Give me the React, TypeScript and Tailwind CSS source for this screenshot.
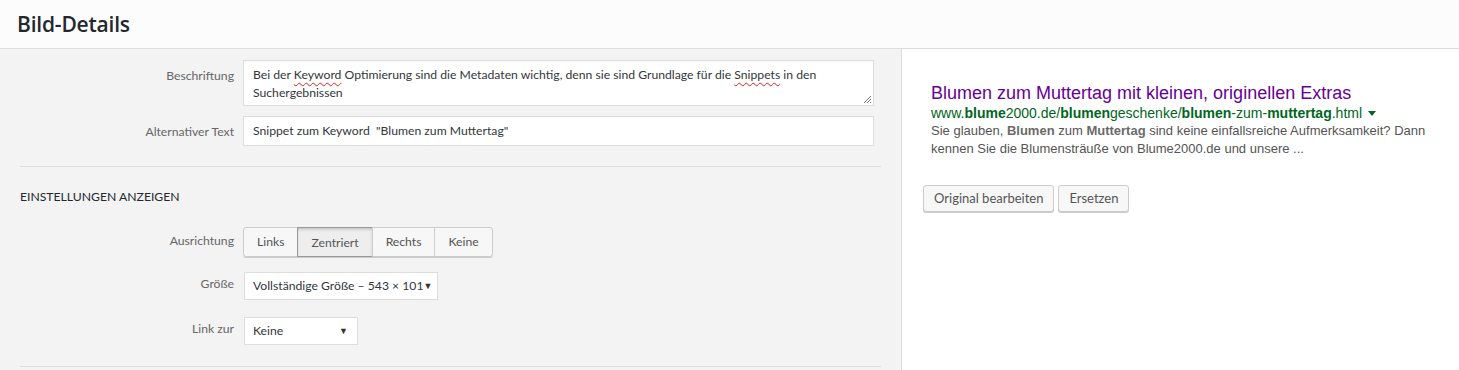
const ui = "font-['Lato','Open_Sans',sans-serif]";
const head = "font-['Open_Sans','Noto_Sans',sans-serif]";
const arial = "font-['Liberation_Sans',Arial,sans-serif]";

const align = [
  { label: "Links", active: false },
  { label: "Zentriert", active: true },
  { label: "Rechts", active: false },
  { label: "Keine", active: false },
];

const Spell = ({ children }: { children: string }) => (
  <span className="underline decoration-wavy decoration-[#e02020] decoration-1 underline-offset-[3px]">{children}</span>
);

const Row = ({ label, top = "pt-[7px]", children }: { label: string; top?: string; children: React.ReactNode }) => (
  <div className="flex">
    <div className={`w-[234px] shrink-0 text-right text-[#666] ${top}`}>{label}</div>
    <div className="ml-[9px]">{children}</div>
  </div>
);

const Select = ({ value, width }: { value: string; width: string }) => (
  <div className={`flex h-[28px] items-center justify-between whitespace-nowrap border border-[#ddd] bg-white pl-[8px] pr-[9px] text-[#32373c] ${width}`}>
    <span>{value}</span>
    <span className="text-[9px] text-[#333]">▼</span>
  </div>
);

export default function App() {
  return (
    <div className={`flex h-[370px] w-[1459px] flex-col overflow-hidden bg-white text-[12.2px] text-[#32373c] ${ui}`}>
      <header className={`flex h-[49px] shrink-0 items-center border-b border-[#dddddd] bg-[#fcfcfc] pl-[17px] shadow-[0_1px_2px_rgba(0,0,0,0.04)] ${head}`}>
        <h1 className="text-[21px] font-semibold leading-none tracking-[-0.2px] text-[#23282d]">Bild-Details</h1>
      </header>
      <div className="flex flex-1">
        <div className="w-[901px] shrink-0 bg-[#f3f3f3] pt-[11px]">
          <Row label="Beschriftung">
            <div className="relative h-[46px] w-[631px] border border-[#ddd] bg-white px-[9px] pt-[5px] leading-[18px] text-[#32373c] shadow-[inset_0_1px_2px_rgba(0,0,0,0.04)]">
              <div>
                Bei der <Spell>Keyword</Spell> Optimierung sind die Metadaten wichtig, denn sie sind Grundlage für die <Spell>Snippets</Spell> in den
              </div>
              <div>Suchergebnissen</div>
              <svg className="absolute bottom-[1px] right-[1px]" width="9" height="9" viewBox="0 0 9 9">
                <path d="M8 1 L1 8 M8 4 L4 8 M8 7 L7 8" stroke="#777" strokeWidth="1" />
              </svg>
            </div>
          </Row>
          <div className="mt-[10px]">
            <Row label="Alternativer Text">
              <div className="flex h-[30px] w-[631px] items-center border border-[#ddd] bg-white px-[9px] text-[#32373c]">
                Snippet zum Keyword&nbsp; "Blumen zum Muttertag"
              </div>
            </Row>
          </div>
          <div className="mx-[20px] mt-[20px] h-px bg-[#dddddd]" />
          <h2 className="mt-[21px] ml-[20px] font-normal uppercase leading-[18px] text-[#23282d]">Einstellungen anzeigen</h2>
          <div className="mt-[21px]">
            <Row label="Ausrichtung" top="pt-[5px]">
              <div className="flex h-[30px] rounded-[3px] shadow-[0_1px_0_#cccccc]">
                {align.map((a, i) => (
                  <div
                    key={a.label}
                    className={`flex items-center border px-[13px] text-[#555] ${
                      a.active
                        ? "border-[#999] bg-[#eeeeee] pt-[3px] shadow-[inset_0_2px_5px_-3px_rgba(0,0,0,0.5)]"
                        : "border-[#ccc] bg-[#f7f7f7]"
                    } ${i === 0 ? "rounded-l-[3px]" : "-ml-px"} ${i === align.length - 1 ? "rounded-r-[3px]" : ""}`}
                  >
                    {a.label}
                  </div>
                ))}
              </div>
            </Row>
          </div>
          <div className="mt-[15px]">
            <Row label="Größe" top="pt-[3px]">
              <div className="ml-px">
                <Select value="Vollständige Größe – 543 × 101" width="w-[194px]" />
              </div>
            </Row>
          </div>
          <div className="mt-[17px]">
            <Row label="Link zur" top="pt-[3px]">
              <div className="ml-px">
                <Select value="Keine" width="w-[114px]" />
              </div>
            </Row>
          </div>
          <div className="mx-[20px] mt-[21px] h-px bg-[#dddddd]" />
        </div>
        <div className="flex-1 border-l border-[#dddddd] bg-white pl-[21px] pt-[33px]">
          <div className={`pl-[8px] ${arial}`}>
            <div className="text-[18px] leading-[22px] text-[#660099]">Blumen zum Muttertag mit kleinen, originellen Extras</div>
            <div className="flex items-center text-[14px] leading-[18px] text-[#006621]">
              <span>
                www.<b>blume</b>2000.de/<b>blumen</b>geschenke/<b>blumen</b>-zum-<b>muttertag</b>.html
              </span>
              <span className="ml-[6px] inline-block border-x-[4px] border-t-[5px] border-x-transparent border-t-[#006621]" />
            </div>
            <div className="text-[13px] leading-[18px] text-[#545454]">
              <div>
                Sie glauben, <b className="text-[#6a6a6a]">Blumen</b> zum <b className="text-[#6a6a6a]">Muttertag</b> sind keine einfallsreiche Aufmerksamkeit? Dann
              </div>
              <div>kennen Sie die Blumensträuße von Blume2000.de und unsere ...</div>
            </div>
          </div>
          <div className="mt-[27px] flex gap-[4px] text-[13px]">
            {["Original bearbeiten", "Ersetzen"].map((b) => (
              <div
                key={b}
                className="flex h-[27px] items-center rounded-[3px] border border-[#ccc] bg-[#f7f7f7] px-[10px] text-[#555] shadow-[0_1px_0_#cccccc]"
              >
                {b}
              </div>
            ))}
          </div>
        </div>
      </div>
    </div>
  );
}
